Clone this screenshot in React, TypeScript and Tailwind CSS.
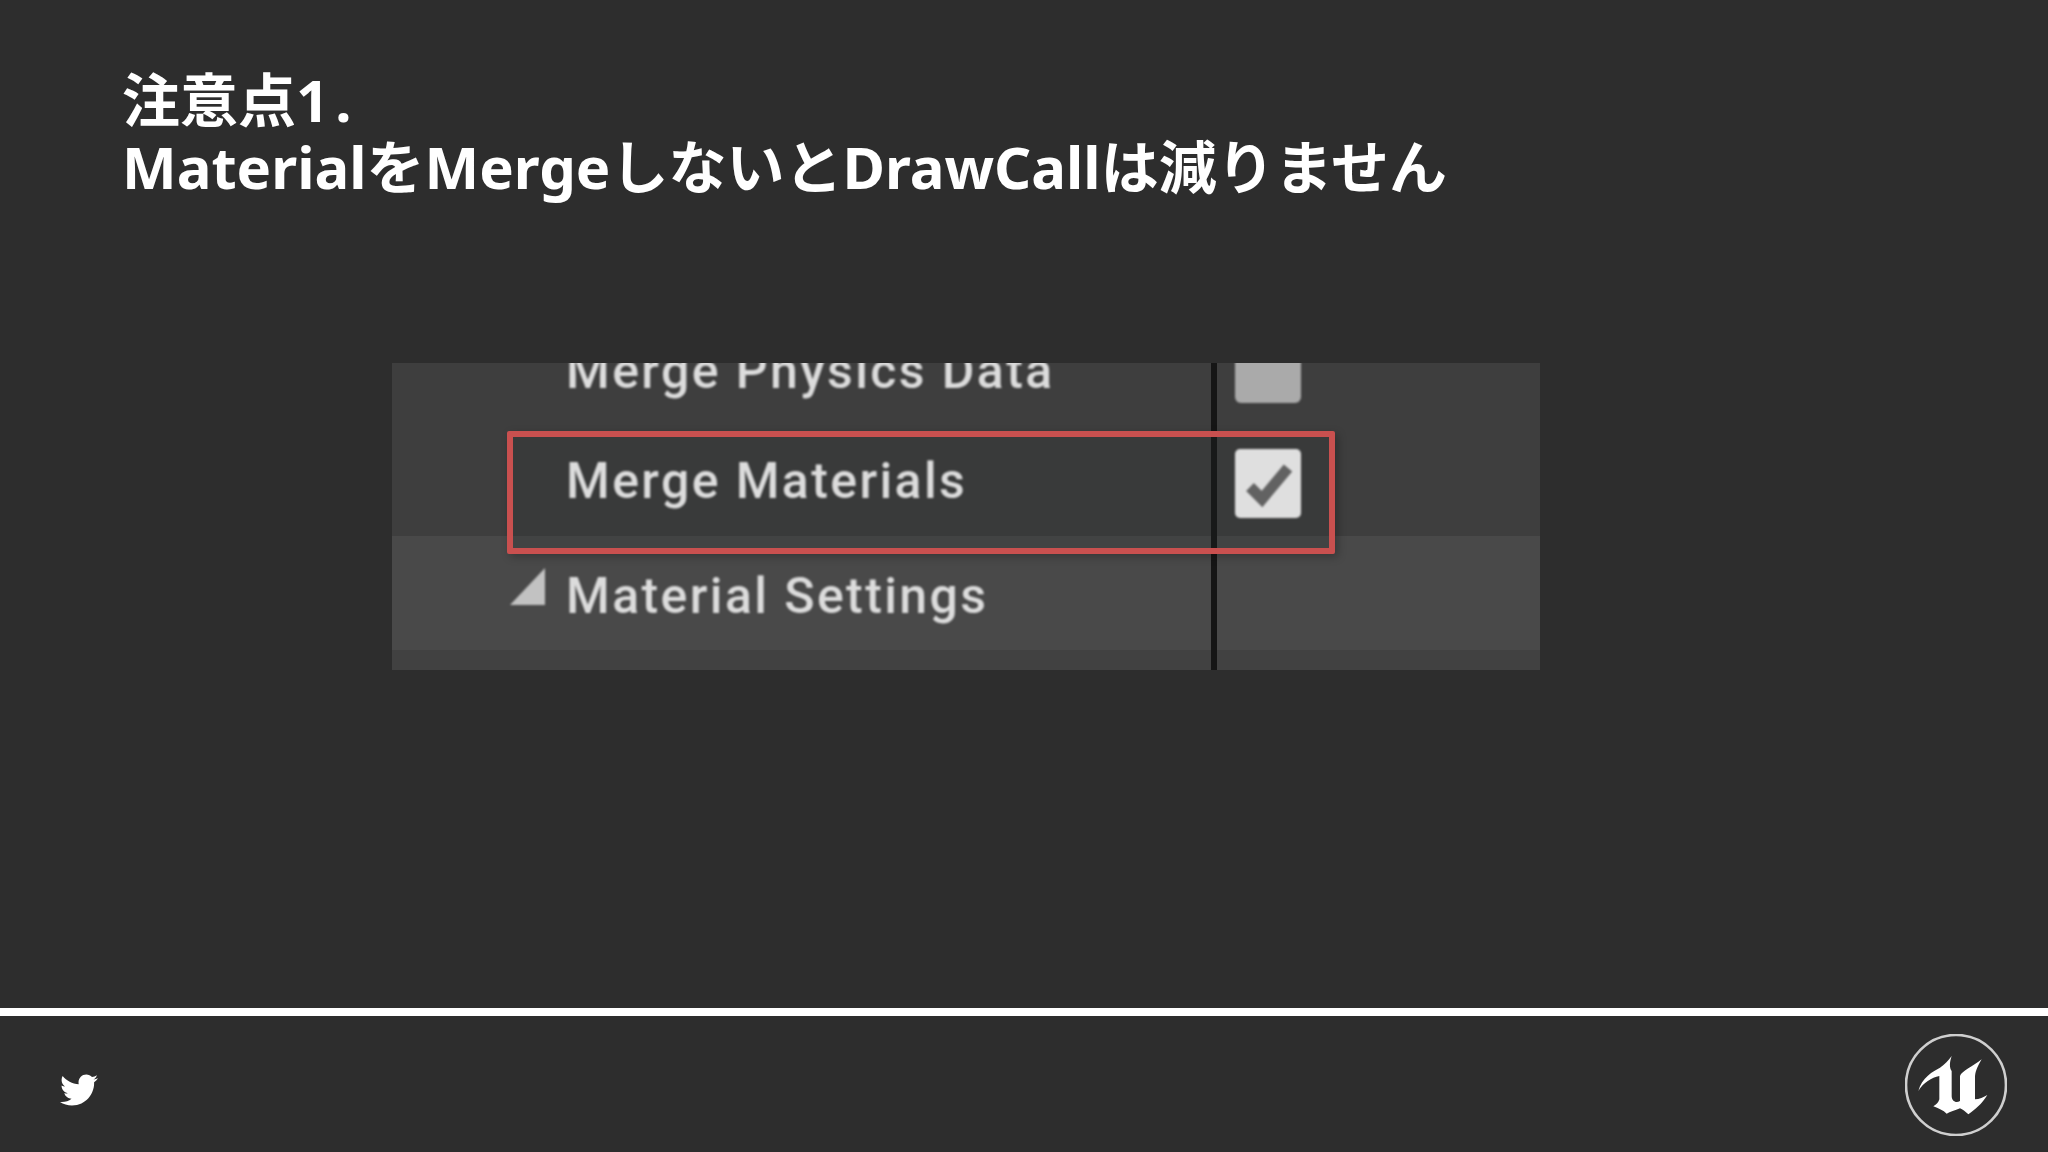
import { FaTwitter } from "react-icons/fa";

const labelFont = "relative z-10 font-['Roboto',sans-serif] font-medium text-[50px] leading-[50px] tracking-[2.4px] text-[#dcdcdc] whitespace-nowrap blur-[0.8px]";

const Check = () => (
    <svg viewBox="0 0 66 69" className="w-[66px] h-[69px] blur-[1px]">
        <rect width="66" height="69" rx="5" fill="#dfdfdf" />
        <path d="M15 38 L27 50 L53 19" fill="none" stroke="#626262" strokeWidth="11" />
    </svg>
);

const Triangle = () => (
    <svg viewBox="0 0 35 37" className="w-[35px] h-[37px] blur-[0.8px]">
        <path d="M35 0 V37 H0 Z" fill="#c2c2c2" />
    </svg>
);

const UnrealLogo = () => (
    <svg viewBox="75 39 306 306" className="w-[102px] h-[102px] blur-[0.7px]">
        <circle cx="228" cy="192" r="150" fill="none" stroke="#cfcfcf" strokeWidth="8" />
        <path
            d="M115 210 C125 170 160 150 180 140 C195 130 205 118 215 105 C208 125 208 140 215 150 L215 225 C215 240 228 248 240 240 L240 165 C245 150 280 135 305 115 C290 140 285 155 285 170 L285 235 C297 235 312 228 322 222 C305 250 285 265 265 280 C255 272 248 265 240 262 C225 268 210 272 200 278 C190 268 175 262 160 256 C170 250 175 245 178 235 L178 165 C155 170 130 185 115 210 Z"
            fill="#ffffff"
        />
    </svg>
);

const App = () => {
    return (
        <div className="w-[2048px] h-[1152px] bg-[#2d2d2d] flex flex-col overflow-hidden">
            <div className="h-[363px] pt-[66px] pl-[122px]">
                <h1 className="font-['Noto_Sans','Noto_Sans_CJK_JP',sans-serif] font-bold text-[58px] leading-[67px] text-white whitespace-nowrap">
                    注意点<span className="tracking-[6px]">1.</span>
                    <br />
                    MaterialをMergeしないとDrawCallは減りません
                </h1>
            </div>

            <div className="relative ml-[392px] w-[1148px] h-[307px] flex flex-col">
                <div className="h-[68px] flex bg-[#3e3e3e] overflow-hidden">
                    <div className="w-[825px] border-r-[6px] border-[#151515] pl-[174px]">
                        <div className={`${labelFont} -mt-[17px]`}>Merge Physics Data</div>
                    </div>
                    <div className="pl-[18px]">
                        <div className="w-[66px] h-[69px] -mt-[29px] rounded-[6px] bg-[#aaaaaa] blur-[0.8px]" />
                    </div>
                </div>

                <div className="h-[105px] flex bg-[#3e3e3e]">
                    <div className="w-[825px] border-r-[6px] border-[#151515] pl-[174px]">
                        <div className={`${labelFont} mt-[25px]`}>Merge Materials</div>
                    </div>
                    <div className="relative z-10 pl-[18px] pt-[18px]">
                        <Check />
                    </div>
                </div>

                <div className="h-[114px] flex bg-[#494949]">
                    <div className="w-[825px] border-r-[6px] border-[#151515] pl-[116px] flex">
                        <div className="mt-[32px] w-[58px] shrink-0 pl-[2px]">
                            <Triangle />
                        </div>
                        <div className={`${labelFont} mt-[35px]`}>Material Settings</div>
                    </div>
                </div>

                <div className="h-[20px] flex bg-[#414141]">
                    <div className="w-[825px] border-r-[6px] border-[#151515]" />
                </div>

                {/* red highlight around the merge materials row */}
                <div className="absolute left-[115px] top-[68px] w-[828px] h-[123px] border-[6px] border-[#c9504f] rounded-[2px] bg-[#2a2e2e]/20 shadow-[3px_3px_8px_rgba(0,0,0,0.25)]" />
            </div>

            <div className="mt-[338px] h-[8px] bg-white blur-[0.7px]" />

            <div className="flex-1 flex justify-between pl-[60px] pr-[41px]">
                <FaTwitter className="mt-[55px] w-[38px] h-[38px] text-white blur-[0.7px]" />
                <div className="mt-[18px]">
                    <UnrealLogo />
                </div>
            </div>
        </div>
    );
};

export default App;
